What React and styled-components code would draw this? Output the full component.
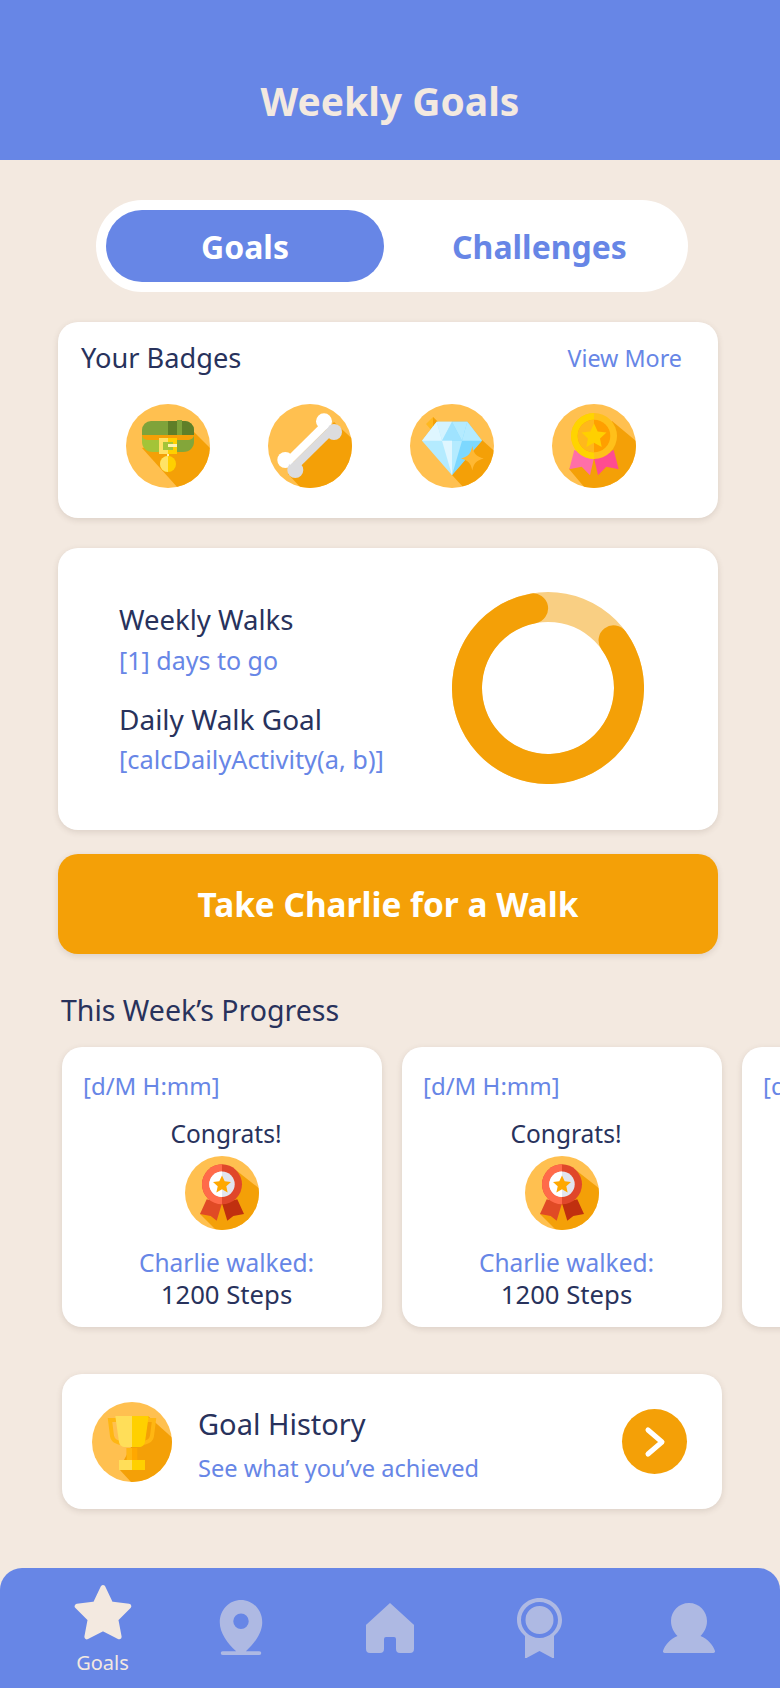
import React from "react";
import styled, { createGlobalStyle } from "styled-components";

const BLUE = "#6786E6";
const NAVY = "#28325C";
const ORANGE = "#F4A007";
const CREAM = "#F3E9E0";
const FACE = "#FFC050";

const GlobalStyle = createGlobalStyle`
  html, body {
    margin: 0;
    padding: 0;
    background: ${CREAM};
    font-family: "Noto Sans", "Open Sans", sans-serif;
  }
  * { box-sizing: border-box; }
`;

function Collar() {
  return (
    <BadgeSvg viewBox="0 0 84 84" $size={84}>
      <circle cx="42" cy="42" r="42" fill={FACE} />
      <clipPath id="c1"><circle cx="42" cy="42" r="42" /></clipPath>
      <polygon clipPath="url(#c1)" points="16,44 52,84 90,70 90,50 68,28" fill={ORANGE} />
      <path d="M16 26a9 9 0 0 1 9-9h34a9 9 0 0 1 9 9v6H16z" fill="#7FA33A" />
      <path d="M42 17h17a9 9 0 0 1 9 9v6H42z" fill="#5F7F28" />
      <rect x="51" y="16" width="5" height="15" fill="#7FA33A" />
      <rect x="16" y="31" width="52" height="7" fill={ORANGE} />
      <path d="M16 31c0 3 3 5 7 5h19v12H27c-7 0-11-5-11-10z" fill="#A3C438" />
      <path d="M68 31c0 3-3 5-7 5H42v12h15c7 0 11-5 11-10z" fill="#83A63A" />
      <rect x="33" y="34" width="18" height="16" fill="#FFE164" />
      <rect x="42" y="34" width="9" height="16" fill="#FFD000" />
      <rect x="37" y="38" width="10" height="8" fill="#A3C438" />
      <rect x="42" y="40" width="9" height="3" fill="#FFF3B0" />
      <rect x="41" y="50" width="2" height="4" fill="#FFF3B0" />
      <circle cx="42" cy="60" r="8" fill="#FFD000" />
      <path d="M42 52a8 8 0 0 0 0 16z" fill="#FFE366" />
    </BadgeSvg>
  );
}

function Bone() {
  return (
    <BadgeSvg viewBox="0 0 84 84" $size={84}>
      <circle cx="42" cy="42" r="42" fill={FACE} />
      <clipPath id="c2"><circle cx="42" cy="42" r="42" /></clipPath>
      <polygon clipPath="url(#c2)" points="20,70 33,84 90,84 90,40 66,18" fill={ORANGE} />
      <circle cx="56" cy="17.3" r="8" fill="#fff" />
      <circle cx="66" cy="28" r="8" fill="#DCDCDE" />
      <circle cx="17.3" cy="56" r="8" fill="#fff" />
      <circle cx="27.3" cy="66" r="8" fill="#DCDCDE" />
      <polygon points="16.6,55.3 55.3,17 61,22.7 22.3,61" fill="#fff" />
      <polygon points="22.3,61 61,22.7 66.7,28.4 28,66.7" fill="#DCDCDE" />
    </BadgeSvg>
  );
}

function Diamond() {
  return (
    <BadgeSvg viewBox="0 0 84 84" $size={84}>
      <circle cx="42" cy="42" r="42" fill={FACE} />
      <clipPath id="c3"><circle cx="42" cy="42" r="42" /></clipPath>
      <polygon clipPath="url(#c3)" points="42,71 54,84 90,84 90,52 72,36" fill={ORANGE} />
      <polygon points="16,20 23,13 30,20 23,28" fill="#FFB81F" />
      <polygon points="23,13 30,20 23,28" fill="#F4A007" />
      <polygon points="12,36.7 26.7,17.7 42,17.7 42,71.3" fill="#B4EBFF" />
      <polygon points="42,17.7 57.3,17.7 72,36.7 42,71.3" fill="#7DD8FF" />
      <polygon points="12,36.7 26.7,17.7 32,36.7" fill="#DFF6FF" />
      <polygon points="26.7,17.7 42,17.7 32,36.7" fill="#D4F3FF" />
      <polygon points="42,17.7 52,36.7 32,36.7" fill="#9FE3FF" />
      <polygon points="42,17.7 57.3,17.7 52,36.7" fill="#B4EBFF" />
      <polygon points="57.3,17.7 72,36.7 52,36.7" fill="#B4EBFF" />
      <polygon points="32,36.7 42,36.7 42,71.3" fill="#DFF6FF" />
      <polygon points="42,36.7 52,36.7 42,71.3" fill="#B4EBFF" />
      <path d="M62.3 42c1.5 8 4 10.500 11.500 12.500-7.500 2-10 4.500-11.500 12-1.500-7.500-4-10-11.300-12 7.300-2 9.800-4.500 11.300-12.500z" fill="#FFB833" />
    </BadgeSvg>
  );
}

function GoldMedal() {
  return (
    <BadgeSvg viewBox="0 0 84 84" $size={84}>
      <circle cx="42" cy="42" r="42" fill={FACE} />
      <clipPath id="c4"><circle cx="42" cy="42" r="42" /></clipPath>
      <polygon clipPath="url(#c4)" points="17,65 33,84 90,84 90,42 60,17" fill={ORANGE} />
      <polygon points="22.300,46 17.300,65.300 29.700,62.700 38,71.300 42,54" fill="#FF6FA8" />
      <polygon points="61.700,46 66.700,65.300 54.300,62.700 46,71.300 42,54" fill="#FF4C90" />
      <circle cx="42" cy="32" r="23" fill="#FFC01A" />
      <path d="M42 9a23 23 0 0 0 0 46z" fill="#FFD400" />
      <circle cx="42" cy="32" r="16.300" fill="#FF9F00" />
      <path d="M42 15.700a16.300 16.300 0 0 0 0 32.600z" fill="#FFB81C" />
      <polygon points="42,19.500 45.700,27.500 54.500,28.500 48,34.500 49.700,43 42,38.700 34.300,43 36,34.500 29.500,28.500 38.300,27.500" fill="#FFD000" />
    </BadgeSvg>
  );
}

function RibbonMedal() {
  return (
    <BadgeSvg viewBox="0 0 74 74" $size={74}>
      <circle cx="37" cy="37" r="37" fill={FACE} />
      <clipPath id="c5"><circle cx="37" cy="37" r="37" /></clipPath>
      <polygon clipPath="url(#c5)" points="15,58 31,74 80,74 80,37 52,15" fill={ORANGE} />
      <polygon points="21.700,43.300 15,58 25.700,60 31.700,64.700 37,47.300" fill="#E04A25" />
      <polygon points="52.300,43.300 59,58 48.300,60 42.300,64.700 37,47.300" fill="#C0300F" />
      <circle cx="37" cy="28.300" r="20" fill="#E0472A" />
      <path d="M37 8.300a20 20 0 0 0 0 40z" fill="#FF6B4A" />
      <circle cx="37" cy="28.300" r="12.700" fill="#E2E5EE" />
      <path d="M37 15.600a12.700 12.700 0 0 0 0 25.400z" fill="#fff" />
      <polygon points="37,19.500 39.700,25.300 46,26 41.300,30.300 42.600,36.500 37,33.300 31.400,36.500 32.700,30.300 28,26 34.300,25.300" fill="#FFA800" />
    </BadgeSvg>
  );
}

function Trophy() {
  return (
    <BadgeSvg viewBox="0 0 80 80" $size={80}>
      <circle cx="40" cy="40" r="40" fill={FACE} />
      <clipPath id="c6"><circle cx="40" cy="40" r="40" /></clipPath>
      <polygon clipPath="url(#c6)" points="27,67 39,80 85,80 85,40 56,14" fill={ORANGE} />
      <path d="M24 18h-6l2 16c1 5 6 7 10 7M56 18h6l-2 16c-1 5-6 7-10 7" fill="none" stroke="#FFB612" strokeWidth="4" />
      <rect x="34.700" y="46" width="10.600" height="13" fill="#FFA800" />
      <rect x="34.700" y="46" width="5.300" height="13" fill="#FFB612" />
      <path d="M23.300 14H40v31H33c-3 0-5.500-2-6-5z" fill="#FFDE59" />
      <path d="M56.700 14H40v31h7c3 0 5.500-2 6-5z" fill="#FFD000" />
      <rect x="27" y="58" width="13" height="10" fill="#FFDE59" />
      <rect x="40" y="58" width="13" height="10" fill="#FFD000" />
    </BadgeSvg>
  );
}

function Ring() {
  // 295 degree arc on a round-capped track
  const r = 81;
  const a1 = (54 * Math.PI) / 180;
  const a2 = (349.4 * Math.PI) / 180;
  const pt = (a) => `${96 + r * Math.sin(a)} ${96 - r * Math.cos(a)}`;
  return (
    <RingSvg viewBox="0 0 192 192">
      <circle cx="96" cy="96" r={r} fill="none" stroke="#F9CF83" strokeWidth="30" />
      <path d={`M${pt(a1)} A${r} ${r} 0 1 1 ${pt(a2)}`} fill="none" stroke={ORANGE} strokeWidth="30" strokeLinecap="round" />
    </RingSvg>
  );
}

const navIcons = [
  {
    id: "star",
    w: 58,
    h: 56,
    body: <path d="M29 3.500l7.800 16.500 18 2.300-13 13 3.300 17.500L29 44.500l-16.100 8.300 3.300-17.500-13-13 18-2.300z" stroke="currentColor" strokeWidth="5" strokeLinejoin="round" />,
  },
  {
    id: "pin",
    w: 44,
    h: 56,
    body: <path fillRule="evenodd" d="M22 0C10 0 0 10 0 23c0 11 8 22 17 30H3a1.500 1.500 0 0 0 0 4h38a1.500 1.500 0 0 0 0-4H27c9-8 17-19 17-30C44 10 34 0 22 0zm0 14a8 8 0 1 1 0 16 8 8 0 0 1 0-16z" />,
  },
  {
    id: "house",
    w: 48,
    h: 50,
    body: <path d="M24 0L47 21a2 2 0 0 1 1 2v23a4 4 0 0 1-4 4H34a4 4 0 0 1-4-4V36a2 2 0 0 0-2-2h-8a2 2 0 0 0-2 2v10a4 4 0 0 1-4 4H4a4 4 0 0 1-4-4V23a2 2 0 0 1 1-2z" />,
  },
  {
    id: "award",
    w: 45,
    h: 60,
    body: <path fillRule="evenodd" d="M22.500 0C10 0 0 9.500 0 22c0 6 2.300 11 8 16v21a1 1 0 0 0 2 .8l12.500-6.800L35 59.800a1 1 0 0 0 2-.8V38c5.700-5 8-10 8-16C45 9.500 35 0 22.500 0zm0 4C32.500 4 41 12 41 22s-8.500 18-18.500 18S4 32 4 22 12.500 4 22.500 4zm0 4a14 14 0 1 0 0 28 14 14 0 0 0 0-28z" />,
  },
  {
    id: "user",
    w: 52,
    h: 51,
    body: <path d="M26 0c10 0 18 8 18 18 0 6-2.500 11-6.500 15C45 36 50 42 52 48c.3 1-.5 2-1.500 2h-49C.5 50-.3 49 0 48c2-6 7-12 14.500-15C10.500 29 8 24 8 18 8 8 16 0 26 0z" />,
  },
];

function NavIcon({ icon, active }) {
  return (
    <NavSvg viewBox={`0 0 ${icon.w} ${icon.h + (icon.id === "pin" ? 2 : 0)}`} width={icon.w} height={icon.h} $active={active}>
      {icon.body}
    </NavSvg>
  );
}

function WalkCard() {
  return (
    <WalkCardBox>
      <WalkDate>[d/M H:mm]</WalkDate>
      <Congrats>Congrats!</Congrats>
      <RibbonMedal />
      <WalkedLabel>Charlie walked:</WalkedLabel>
      <Steps>1200 Steps</Steps>
    </WalkCardBox>
  );
}

export default function App() {
  return (
    <>
      <GlobalStyle />
      <Page>
        <Header>
          <Title>Weekly Goals</Title>
        </Header>
        <Toggle>
          <ToggleOption $active>Goals</ToggleOption>
          <ToggleOption $shift>Challenges</ToggleOption>
        </Toggle>

        <BadgesCard>
          <BadgesHead>
            <CardTitle $size={27.2}>Your Badges</CardTitle>
            <ViewMore>View More</ViewMore>
          </BadgesHead>
          <BadgeRow>
            <Collar />
            <Bone />
            <Diamond />
            <GoldMedal />
          </BadgeRow>
        </BadgesCard>

        <GoalCard>
          <GoalText>
            <CardTitle $size={27.5}>Weekly Walks</CardTitle>
            <Sub $size={25}>[1] days to go</Sub>
            <GoalGap />
            <CardTitle $size={28}>Daily Walk Goal</CardTitle>
            <Sub $size={25.4}>[calcDailyActivity(a, b)]</Sub>
          </GoalText>
          <Ring />
        </GoalCard>

        <WalkButton>Take Charlie for a Walk</WalkButton>

        <SectionTitle>This Week’s Progress</SectionTitle>
        <ProgressRow>
          <WalkCard />
          <WalkCard />
          <WalkCard />
        </ProgressRow>

        <HistoryCard>
          <Trophy />
          <HistoryText>
            <CardTitle $size={29}>Goal History</CardTitle>
            <Sub $size={23.6} $gap={8}>See what you’ve achieved</Sub>
          </HistoryText>
          <ArrowButton>
            <svg width="22" height="32" viewBox="0 0 22 32" fill="none">
              <path d="M4 4l14 12L4 28" stroke="#fff" strokeWidth="5" strokeLinecap="round" strokeLinejoin="round" />
            </svg>
          </ArrowButton>
        </HistoryCard>

        <Nav>
          {navIcons.map((icon, i) => (
            <NavItem key={icon.id} $drop={i === 0}>
              <NavIcon icon={icon} active={i === 0} />
              {i === 0 && <NavLabel>Goals</NavLabel>}
            </NavItem>
          ))}
        </Nav>
      </Page>
    </>
  );
}

const Page = styled.div`
  width: 780px;
  height: 1688px;
  overflow: hidden;
  display: flex;
  flex-direction: column;
  background: ${CREAM};
`;

const Header = styled.header`
  height: 160px;
  flex: none;
  background: ${BLUE};
  display: flex;
  align-items: flex-end;
  justify-content: center;
  padding-bottom: 33px;
`;

const Title = styled.h1`
  margin: 0;
  font-size: 39px;
  line-height: 52px;
  font-weight: 700;
  color: ${CREAM};
`;

const Toggle = styled.div`
  width: 592px;
  height: 92px;
  margin: 40px 0 30px 96px;
  flex: none;
  padding: 10px;
  border-radius: 46px;
  background: #fff;
  display: grid;
  grid-template-columns: 278px 1fr;
`;

const ToggleOption = styled.div`
  border-radius: 36px;
  display: flex;
  align-items: center;
  justify-content: center;
  padding-left: ${(p) => (p.$shift ? 17 : 0)}px;
  font-size: 32px;
  font-weight: 700;
  color: ${(p) => (p.$active ? "#fff" : BLUE)};
  background: ${(p) => (p.$active ? BLUE : "transparent")};
`;

const Card = styled.section`
  background: #fff;
  border-radius: 20px;
  box-shadow: 0 2px 6px rgba(80, 60, 40, 0.14);
`;

const BadgesCard = styled(Card)`
  width: 660px;
  height: 196px;
  margin: 0 0 30px 58px;
  flex: none;
  padding: 18px 36px 0 23px;
`;

const BadgesHead = styled.div`
  display: flex;
  justify-content: space-between;
  align-items: center;
`;

const CardTitle = styled.div`
  font-size: ${(p) => p.$size}px;
  line-height: 36px;
  font-weight: 400;
  color: ${NAVY};
`;

const ViewMore = styled.span`
  font-size: 23.300px;
  color: ${BLUE};
`;

const BadgeRow = styled.div`
  display: flex;
  gap: 58px;
  margin: 28px 0 0 45px;
`;

const BadgeSvg = styled.svg`
  display: block;
  flex: none;
  width: ${(p) => p.$size}px;
  height: ${(p) => p.$size}px;
`;

const GoalCard = styled(Card)`
  width: 660px;
  height: 282px;
  margin: 0 0 24px 58px;
  flex: none;
  padding: 0 74px 0 61px;
  display: flex;
  align-items: center;
  justify-content: space-between;
`;

const GoalText = styled.div`
  display: flex;
  flex-direction: column;
`;

const GoalGap = styled.div`
  height: 23px;
`;

const Sub = styled.div`
  font-size: ${(p) => p.$size}px;
  line-height: 36px;
  margin-top: ${(p) => p.$gap ?? 4}px;
  color: ${BLUE};
`;

const RingSvg = styled.svg`
  width: 192px;
  height: 192px;
  flex: none;
  margin-bottom: 2px;
`;

const WalkButton = styled.button`
  width: 660px;
  height: 100px;
  margin: 0 0 38px 58px;
  flex: none;
  border: 0;
  border-radius: 20px;
  background: ${ORANGE};
  box-shadow: 0 2px 6px rgba(80, 60, 40, 0.14);
  color: #fff;
  font-family: inherit;
  font-size: 33.400px;
  font-weight: 700;
`;

const SectionTitle = styled.h2`
  margin: 0 0 19px 61px;
  font-size: 28.500px;
  line-height: 36px;
  font-weight: 400;
  color: ${NAVY};
`;

const ProgressRow = styled.div`
  display: flex;
  gap: 20px;
  padding-left: 62px;
  margin-bottom: 47px;
  flex: none;
`;

const WalkCardBox = styled(Card)`
  width: 320px;
  height: 280px;
  flex: none;
  padding: 22px 21px 0;
  display: flex;
  flex-direction: column;
  align-items: center;
`;

const WalkDate = styled.div`
  align-self: flex-start;
  font-size: 24px;
  line-height: 34px;
  color: ${BLUE};
`;

const Congrats = styled.div`
  font-size: 24.500px;
  line-height: 34px;
  margin: 14px 0 5px;
  padding-left: 8px;
  color: ${NAVY};
`;

const WalkedLabel = styled.div`
  font-size: 24.500px;
  line-height: 34px;
  margin-top: 16px;
  padding-left: 9px;
  color: ${BLUE};
`;

const Steps = styled.div`
  font-size: 25.700px;
  line-height: 34px;
  margin-top: -2px;
  padding-left: 9px;
  color: ${NAVY};
`;

const HistoryCard = styled(Card)`
  width: 660px;
  height: 135px;
  margin-left: 62px;
  flex: none;
  padding: 0 35px 0 30px;
  display: flex;
  align-items: center;
`;

const HistoryText = styled.div`
  margin-left: 26px;
  padding-top: 8px;
  flex: 1;
`;

const ArrowButton = styled.div`
  width: 65px;
  height: 65px;
  border-radius: 50%;
  background: ${ORANGE};
  display: flex;
  align-items: center;
  justify-content: center;
`;

const Nav = styled.nav`
  margin-top: auto;
  height: 120px;
  flex: none;
  background: ${BLUE};
  border-radius: 22px 22px 0 0;
  display: grid;
  grid-template-columns: 127px repeat(4, 149.5px);
  padding-left: 39px;
  align-items: center;
`;

const NavItem = styled.div`
  display: flex;
  flex-direction: column;
  align-items: center;
  padding-top: ${(p) => (p.$drop ? 5 : 0)}px;
`;

const NavSvg = styled.svg`
  display: block;
  fill: currentColor;
  color: ${(p) => (p.$active ? CREAM : "#AEB9E3")};
`;

const NavLabel = styled.span`
  font-size: 20px;
  line-height: 28px;
  margin-top: 9px;
  color: ${CREAM};
`;
